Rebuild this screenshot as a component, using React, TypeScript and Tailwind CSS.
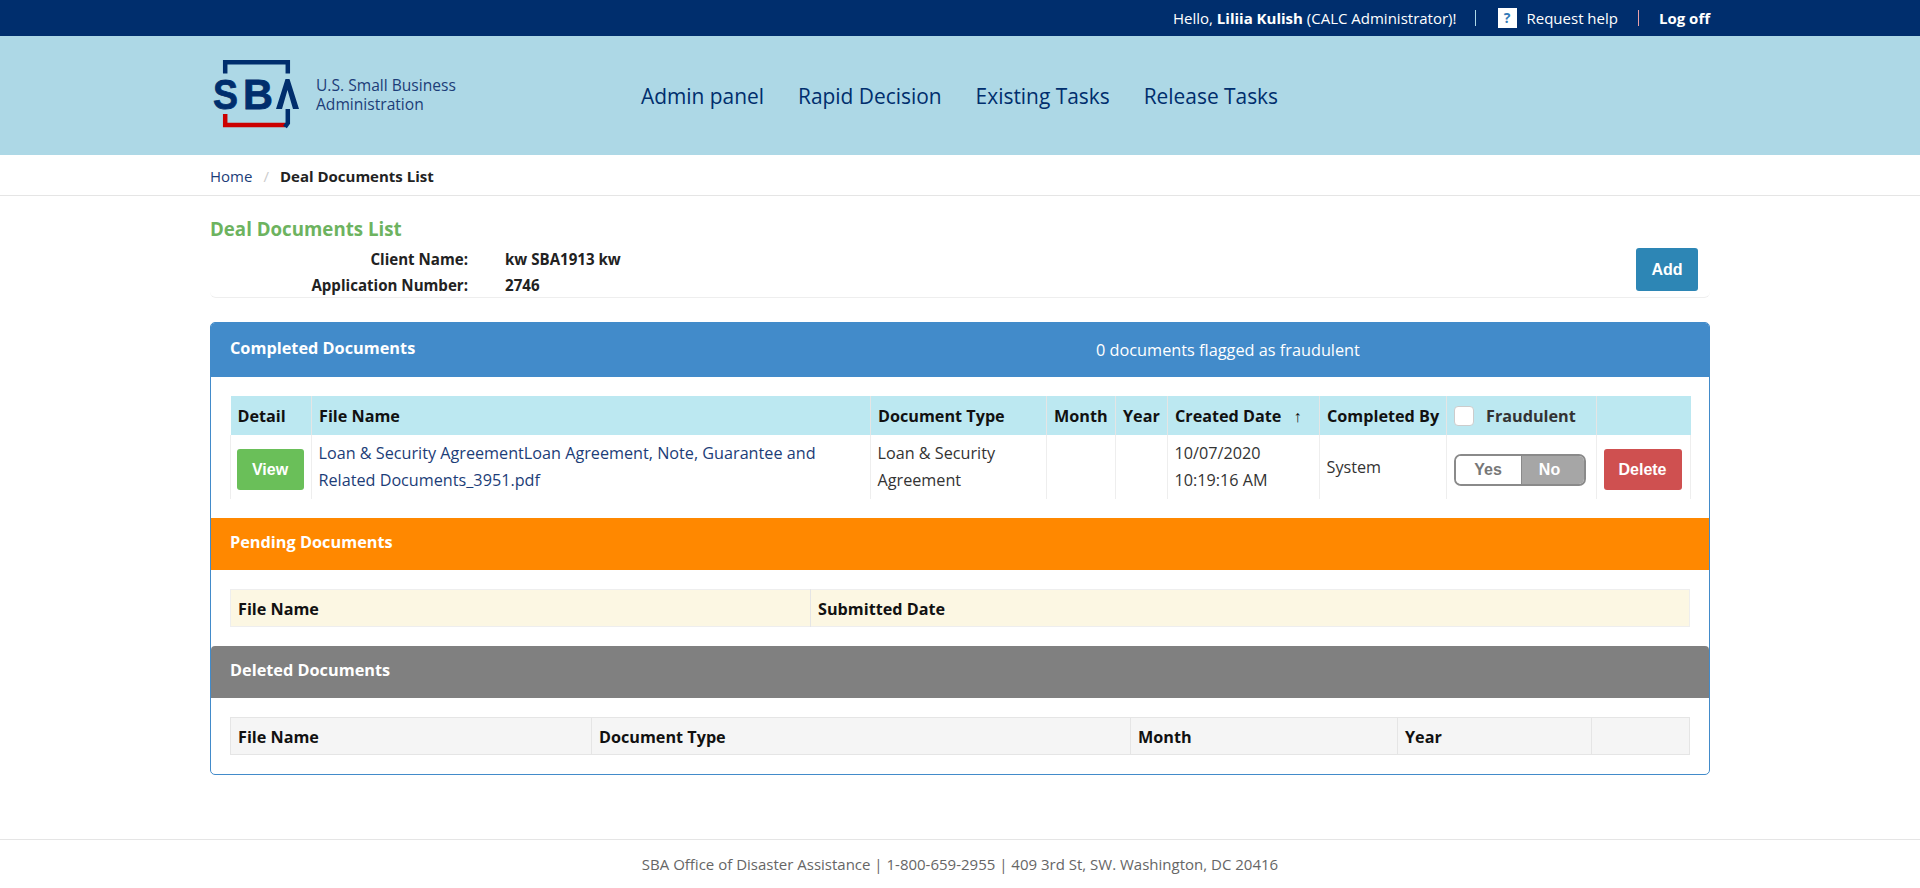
import React from "react";

const font = { fontFamily: '"Open Sans", sans-serif' };

function Logo() {
  return (
    <svg width="90" height="70" viewBox="0 0 90 70" className="block">
      <path d="M13.2 13.5V2.2H75.8V13.5" fill="none" stroke="#002e6d" strokeWidth="4.5" />
      <text x="1" y="49" fontFamily='"Liberation Sans", sans-serif' fontWeight="700" fontSize="42" fill="#002e6d" stroke="#002e6d" strokeWidth="0.8" textLength="25" lengthAdjust="spacingAndGlyphs">S</text>
      <text x="31" y="49" fontFamily='"Liberation Sans", sans-serif' fontWeight="700" fontSize="42" fill="#002e6d" stroke="#002e6d" strokeWidth="0.8" textLength="30" lengthAdjust="spacingAndGlyphs">B</text>
      <path d="M64 49L73.5 19H77.5L87 49H81L75.5 30L70 49Z" fill="#002e6d" />
      <path d="M13.2 54V65H73" fill="none" stroke="#cc0000" strokeWidth="4.5" />
      <path d="M75.8 49V63L73 67" fill="none" stroke="#002e6d" strokeWidth="4.5" />
    </svg>
  );
}

function Th({ children, className = "" }: { children?: React.ReactNode; className?: string }) {
  return <th className={`border-r border-[#e5e5e5] px-[7px] pt-[2px] text-left align-middle text-[16.2px] font-bold text-[#111] last:border-r-0 ${className}`}>{children}</th>;
}

function Td({ children, className = "text-[#333]" }: { children?: React.ReactNode; className?: string }) {
  return <td className={`border-l border-[#eeeeee] px-[6.5px] align-middle text-[16.2px] leading-[27px] last:border-r ${className}`}>{children}</td>;
}

const btn = { fontFamily: '"Liberation Sans", Arial, sans-serif' };

export default function App() {
  return (
    <div className="min-h-[888px] bg-white text-[#333]" style={font}>
      <div className="h-[36px] bg-[#002e6d] text-[15px] text-white">
        <div className="mx-auto flex h-full w-[1500px] items-center justify-end">
          <span>Hello, <b>Liliia Kulish</b> (CALC Administrator)!</span>
          <span className="ml-[18px] mr-[22px] h-[16px] w-px bg-[#add8e6]" />
          <span className="mr-[10px] flex h-[20px] w-[19px] items-center justify-center bg-white text-[14px] font-bold leading-none text-[#337ab7]">?</span>
          <span>Request help</span>
          <span className="mx-[20px] h-[16px] w-px bg-[#e9a0a8]" />
          <b>Log off</b>
        </div>
      </div>

      <div className="h-[119px] bg-[#add8e6]">
        <div className="mx-auto flex h-full w-[1500px] items-start">
          <div className="mt-[24px] ml-[2px] h-[70px] w-[90px] shrink-0"><Logo /></div>
          <div className="mt-[40px] ml-[14px] w-[175px] shrink-0 text-[15.6px] leading-[19px] text-[#1c3d78]">
            <div>U.S. Small Business</div>
            <div>Administration</div>
          </div>
          <nav className="mt-[46px] ml-[150px] flex gap-[34px] text-[20.9px] font-medium leading-[28px] text-[#002e6d]">
            <span>Admin panel</span>
            <span>Rapid Decision</span>
            <span>Existing Tasks</span>
            <span>Release Tasks</span>
          </nav>
        </div>
      </div>

      <div className="h-[41px] border-b border-[#e5e5e5]">
        <div className="mx-auto flex h-full w-[1500px] items-center pt-[2px] text-[15px]">
          <span className="text-[#1c3d78]">Home</span>
          <span className="mx-[11px] text-[#cccccc]">/</span>
          <span className="font-bold text-[#222]">Deal Documents List</span>
        </div>
      </div>

      <div className="mx-auto w-[1500px]">
        <h1 className="mt-[20px] mb-[1px] text-[18.7px] font-bold leading-[25px] text-[#6db35f]">Deal Documents List</h1>
        <div className="flex h-[56px] items-start justify-between rounded-b-[6px] border-b border-[#eeeeee] pt-[4px] text-[15.1px] font-bold leading-[26px] text-[#222]">
          <div className="grid grid-cols-[258px_auto] gap-x-[37px]">
            <span className="text-right">Client Name:</span>
            <span>kw SBA1913 kw</span>
            <span className="text-right">Application Number:</span>
            <span>2746</span>
          </div>
          <button className="mr-[12px] mt-[2px] h-[43px] w-[62px] rounded-[3px] bg-[#2d86b5] text-[16px] font-bold text-white" style={btn}>Add</button>
        </div>

        <div className="mt-[24px] h-[453px] overflow-hidden rounded-[5px] border border-[#428bca]">
          <div className="relative flex h-[54px] items-center bg-[#428bca] pl-[19px] text-[16.3px] font-bold text-white">
            <span className="mb-[3px]">Completed Documents</span>
            <span className="absolute left-[885px] top-[15px] text-[16.3px] font-normal leading-[24px]">0 documents flagged as fraudulent</span>
          </div>

          <div className="px-[19px] pt-[19px]">
            <table className="w-[1460px] table-fixed border-collapse">
              <colgroup>
                <col className="w-[81px]" /><col className="w-[559px]" /><col className="w-[176px]" /><col className="w-[69px]" /><col className="w-[52px]" /><col className="w-[152px]" /><col className="w-[127px]" /><col className="w-[150px]" /><col className="w-[94px]" />
              </colgroup>
              <thead>
                <tr className="h-[39px] bg-[#bce8f1]">
                  <Th>Detail</Th><Th>File Name</Th><Th>Document Type</Th><Th>Month</Th><Th>Year</Th>
                  <Th><span className="whitespace-nowrap">Created Date <span className="ml-[8px] text-[16px]">↑</span></span></Th>
                  <Th><span className="whitespace-nowrap">Completed By</span></Th>
                  <Th>
                    <span className="flex items-center text-[#333]">
                      <span className="h-[20px] w-[20px] rounded-[4px] border border-[#cccccc] bg-white" />
                      <span className="ml-[12px]">Fraudulent</span>
                    </span>
                  </Th>
                  <Th />
                </tr>
              </thead>
              <tbody>
                <tr className="h-[64px]">
                  <Td>
                    <button className="ml-[-1px] mt-[4px] block h-[41px] w-[67px] rounded-[3px] bg-[#6abf59] text-[16px] font-bold text-white" style={btn}>View</button>
                  </Td>
                  <Td className="text-[#1c3d78]">Loan &amp; Security AgreementLoan Agreement, Note, Guarantee and Related Documents_3951.pdf</Td>
                  <Td>Loan &amp; Security Agreement</Td>
                  <Td /><Td />
                  <Td className="whitespace-nowrap text-[#333]">10/07/2020<br />10:19:16 AM</Td>
                  <Td>System</Td>
                  <Td>
                    <div className="mt-[6px] flex h-[32px] w-[132px] overflow-hidden rounded-[7px] border-2 border-[#8a8a8a] text-[16px] font-bold leading-[28px]" style={btn}>
                      <span className="w-[65px] bg-white text-center text-[#777]">Yes</span>
                      <span className="flex-1 border-l border-[#8a8a8a] bg-[#a6a6a6] pr-[6px] text-center text-white">No</span>
                    </div>
                  </Td>
                  <Td>
                    <button className="mt-[4px] block h-[41px] w-[78px] rounded-[3px] bg-[#cf5050] text-[16px] font-bold text-white" style={btn}>Delete</button>
                  </Td>
                </tr>
              </tbody>
            </table>
          </div>

          <div className="mt-[19px] flex h-[52px] items-center bg-[#ff8800] pb-[4px] pl-[19px] text-[16.3px] font-bold text-white">Pending Documents</div>
          <div className="px-[19px] pt-[19px]">
            <table className="w-[1460px] table-fixed border-collapse border border-[#eeeeee]">
              <colgroup><col className="w-[580px]" /><col /></colgroup>
              <thead>
                <tr className="h-[37px] bg-[#fcf7e3]"><Th>File Name</Th><Th>Submitted Date</Th></tr>
              </thead>
            </table>
          </div>

          <div className="mt-[19px] flex h-[52px] items-center rounded-t-[4px] bg-[#808080] pb-[4px] pl-[19px] text-[16.3px] font-bold text-white">Deleted Documents</div>
          <div className="px-[19px] pt-[19px]">
            <table className="w-[1460px] table-fixed border-collapse border border-[#e5e5e5]">
              <colgroup><col className="w-[361px]" /><col className="w-[539px]" /><col className="w-[267px]" /><col className="w-[194px]" /><col /></colgroup>
              <thead>
                <tr className="h-[37px] bg-[#f5f5f5]"><Th>File Name</Th><Th>Document Type</Th><Th>Month</Th><Th>Year</Th><Th /></tr>
              </thead>
            </table>
          </div>
        </div>
      </div>

      <footer className="mt-[64px] flex h-[49px] items-center justify-center border-t border-[#e5e5e5] text-[15px] text-[#666]">
        SBA Office of Disaster Assistance | 1-800-659-2955 | 409 3rd St, SW. Washington, DC 20416
      </footer>
    </div>
  );
}
